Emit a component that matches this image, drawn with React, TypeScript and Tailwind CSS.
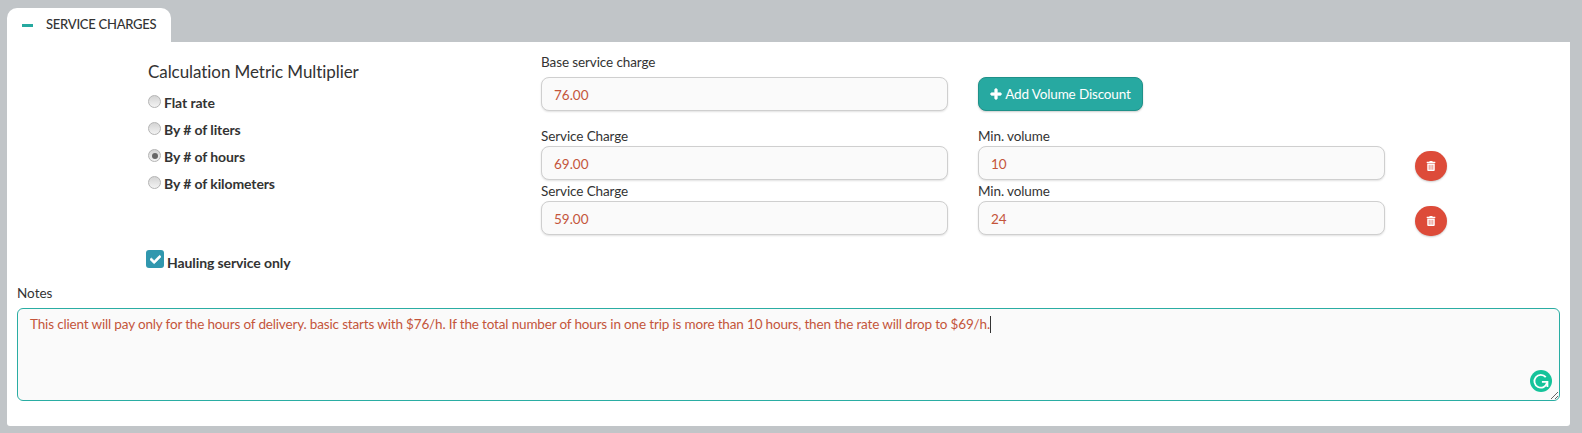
import { FaCheck, FaPlus, FaTrashAlt } from 'react-icons/fa'

const metrics = [
  { label: 'Flat rate', checked: false },
  { label: 'By # of liters', checked: false },
  { label: 'By # of hours', checked: true },
  { label: 'By # of kilometers', checked: false },
]

const volumeRows = [
  { charge: '69.00', volume: '10' },
  { charge: '59.00', volume: '24' },
]

const notes =
  'This client will pay only for the hours of delivery. basic starts with $76/h. If the total number of hours in one trip is more than 10 hours, then the rate will drop to $69/h.'

function Radio({ label, checked }: { label: string; checked: boolean }) {
  return (
    <label className="flex h-[27px] items-start">
      <span className="mt-[3px] flex h-[13px] w-[13px] items-center justify-center rounded-full border border-[#b4b4b4] bg-[linear-gradient(180deg,#d4d4d4,#f3f3f3)]">
        {checked && <span className="h-[6px] w-[6px] rounded-full bg-[#666]" />}
      </span>
      <span className="mt-px ml-[3px] text-[14px] leading-[20px] font-bold tracking-[-0.1px] text-[#333]">{label}</span>
    </label>
  )
}

function Field({ label, value, className }: { label: string; value: string; className?: string }) {
  return (
    <div>
      <div className={`text-[13.5px] leading-[18px] tracking-[-0.1px] text-[#333] ${className ?? ''}`}>{label}</div>
      <input
        readOnly
        value={value}
        className="h-[34px] w-full rounded-[8px] border border-[#cfcfcf] bg-[#fafafa] px-[12px] pt-[2px] text-[13.5px] text-[#c4553a] shadow-[0_1px_2px_rgba(0,0,0,0.12)] outline-none"
      />
    </div>
  )
}

export default function App() {
  return (
    <div className="h-[433px] bg-[#c1c5c8] px-[7px] pt-[8px] pr-[12px] font-['Lato',sans-serif]">
      <div className="flex h-[34px] w-[164px] items-center rounded-t-[10px] bg-white pl-[15px]">
        <span className="h-[3px] w-[11px] bg-[#26a9a0]" />
        <span className="ml-[13px] text-[13px] font-medium tracking-[-0.25px] text-[#333]">SERVICE CHARGES</span>
      </div>

      <div className="h-[384px] rounded-b-[3px] bg-white px-[10px]">
        <div className="flex h-[208px] pt-[11px]">
          <div className="w-[524px] pl-[131px]">
            <h3 className="mt-[8px] mb-[9px] text-[17px] leading-[22px] tracking-[-0.07px] text-[#333]">Calculation Metric Multiplier</h3>
            {metrics.map((m) => (
              <Radio key={m.label} label={m.label} checked={m.checked} />
            ))}
          </div>

          <div className="grid grid-cols-[407px_407px_32px] content-start gap-x-[30px]">
            <Field label="Base service charge" value="76.00" className="mb-[6px]" />
            <div className="pt-[24px]">
              <button
                type="button"
                className="flex h-[34px] w-[165px] items-center justify-center gap-[3px] rounded-[8px] border border-[#1f9189] bg-[#27a9a1] text-[13.5px] tracking-[-0.15px] text-white shadow-[0_1px_2px_rgba(0,0,0,0.2)]"
              >
                <FaPlus className="h-[12px] w-[12px]" stroke="currentColor" strokeWidth={40} />
                Add Volume Discount
              </button>
            </div>
            <div />

            {volumeRows.map((row, i) => (
              <div key={row.volume} className={i === 0 ? 'col-span-3 mt-[16px] grid grid-cols-subgrid' : 'col-span-3 mt-px grid grid-cols-subgrid'}>
                <Field label="Service Charge" value={row.charge} className="mb-px" />
                <Field label="Min. volume" value={row.volume} className="mb-px" />
                <div className="pt-[24px]">
                  <button
                    type="button"
                    aria-label="Remove"
                    className="flex h-[30px] w-[32px] items-center justify-center rounded-full bg-[#dd4b39] text-white shadow-[0_1px_2px_rgba(0,0,0,0.2)]"
                  >
                    <FaTrashAlt className="h-[10px] w-[10px]" />
                  </button>
                </div>
              </div>
            ))}
          </div>
        </div>

        <label className="ml-[129px] flex h-[34px] items-start">
          <span className="flex h-[18px] w-[18px] items-center justify-center rounded-[3px] bg-[#3097ae] text-white">
            <FaCheck className="h-[11px] w-[11px]" stroke="currentColor" strokeWidth={30} />
          </span>
          <span className="mt-[3px] ml-[3px] text-[14px] leading-[20px] font-bold tracking-[-0.1px] text-[#333]">Hauling service only</span>
        </label>

        <div className="text-[13.5px] leading-[18px] text-[#333]">Notes</div>
        <div className="relative mt-[6px]">
          <textarea
            readOnly
            value={notes}
            className="block h-[93px] w-full resize-y rounded-[6px] border border-[#2aada3] bg-[#fafafa] px-[12px] py-[6px] text-[13.5px] leading-[18px] tracking-[-0.16px] text-[#c4553a] outline-none"
          />
          <span className="absolute top-[8px] left-[973px] h-[17px] w-px bg-[#333]" />
          <svg viewBox="0 0 24 24" className="absolute right-[8px] bottom-[9px] h-[22px] w-[22px]">
            <circle cx="12" cy="12" r="12" fill="#15c39a" />
            <path d="M17.2 7.8A7 7 0 1 0 18.6 14" fill="none" stroke="#fff" strokeWidth="2" />
            <path d="M13 13h6v5.5" fill="none" stroke="#fff" strokeWidth="2" />
          </svg>
        </div>
      </div>
    </div>
  )
}
